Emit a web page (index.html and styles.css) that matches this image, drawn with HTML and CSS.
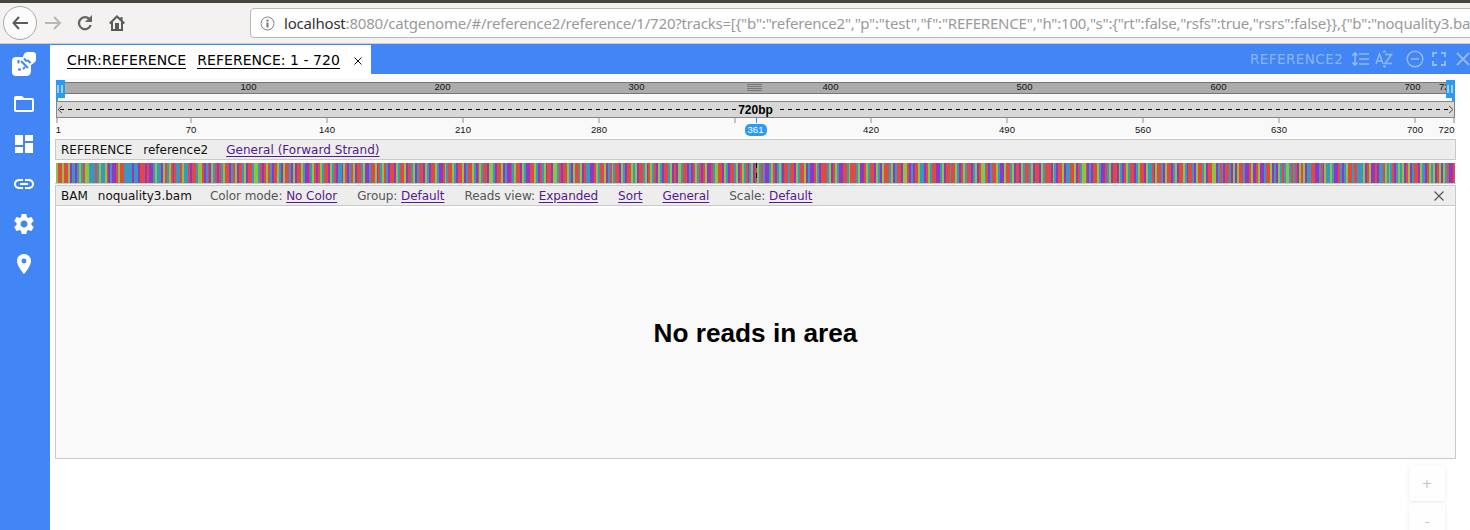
FILE: index.html
```
<!DOCTYPE html>
<html lang="en">
<head>
<meta charset="utf-8">
<title>Genome browser</title>
<link rel="stylesheet" href="styles.css">
</head>
<body>
<header class="browser">
  <div class="back"><svg width="16" height="14" viewBox="0 0 16 14"><path d="M7 1 1.500 7 7 13M2 7h14" fill="none" stroke="#5b5b59" stroke-width="2"/></svg></div>
  <svg class="forward" width="17" height="14" viewBox="0 0 17 14"><path d="m9 1 6 6-6 6M0 7h15" fill="none" stroke="#b8b8b6" stroke-width="2"/></svg>
  <svg class="reload" width="16" height="16" viewBox="0 0 16 16"><path d="M12.500 4.200A6 6 0 1 0 13.700 10" fill="none" stroke="#666664" stroke-width="2.300"/><path d="M15 0v7H8z" fill="#666664"/></svg>
  <svg class="home" width="16" height="16" viewBox="0 0 16 16"><path d="M.7 8.500 8 1.500l7.300 7M12.500 2v4M3 7v8h10V7" fill="none" stroke="#5b5b59" stroke-width="2"/><path d="M6 8h4v7H6z" fill="#5b5b59"/></svg>
  <div class="address">
    <svg width="15" height="15" viewBox="0 0 15 15"><circle cx="7.500" cy="7.500" r="6.500" fill="none" stroke="#858585"/><path d="M7.500 6.500v5M7.500 3.500v2" fill="none" stroke="#777" stroke-width="2"/></svg>
    <span class="url"><b>localhost</b>:8080/catgenome/#/reference2/reference/1/720?tracks=[{"b":"reference2","p":"test","f":"REFERENCE","h":100,"s":{"rt":false,"rsfs":true,"rsrs":false}},{"b":"noquality3.ba</span>
  </div>
</header>
<div class="app">
  <nav class="side">
    <svg width="24" height="24" viewBox="0 0 24 24"><path d="M4 5h7q1-5 5-5h5q3 0 3 3v5q0 2-5 5v6q0 5-5 5H4q-4 0-4-4V9q0-4 4-4z" fill="#fff"/><path d="M6.500 8v3.500M9 9l7 7M12 6.500l3 3M15.500 8l3 3M6 17.500h3M11 17l2-2" stroke="#4285f4" stroke-width="2" fill="none"/></svg>
    <svg width="24" height="24" viewBox="0 0 24 24"><path d="M20 6h-8l-2-2H4c-1.100 0-2 .9-2 2v12c0 1.100.9 2 2 2h16c1.100 0 2-.9 2-2V8c0-1.100-.9-2-2-2zm0 12H4V8h16z" fill="#fff"/></svg>
    <svg width="24" height="24" viewBox="0 0 24 24"><path d="M3 13h8V3H3zm0 8h8v-6H3zm10 0h8V11h-8zm0-18v6h8V3z" fill="#fff"/></svg>
    <svg width="24" height="24" viewBox="0 0 24 24"><path d="M3.900 12c0-1.710 1.390-3.100 3.100-3.100h4V7H7c-2.760 0-5 2.240-5 5s2.240 5 5 5h4v-1.900H7c-1.710 0-3.100-1.390-3.100-3.100zM8 13h8v-2H8zm9-6h-4v1.900h4c1.710 0 3.100 1.390 3.100 3.100s-1.390 3.100-3.100 3.100h-4V17h4c2.760 0 5-2.240 5-5s-2.240-5-5-5z" fill="#fff"/></svg>
    <svg width="24" height="24" viewBox="0 0 24 24"><path d="M19.430 12.980c.04-.32.07-.64.07-.98s-.03-.66-.07-.98l2.110-1.650c.19-.15.24-.42.12-.64l-2-3.460c-.12-.22-.39-.3-.61-.22l-2.490 1c-.52-.4-1.080-.73-1.690-.98l-.38-2.650C14.460 2.180 14.250 2 14 2h-4c-.25 0-.46.18-.49.42l-.38 2.650c-.61.25-1.170.59-1.690.98l-2.490-1c-.23-.09-.49 0-.61.22l-2 3.460c-.13.22-.07.49.12.64l2.110 1.650c-.04.32-.07.65-.07.98s.03.66.07.98l-2.110 1.650c-.19.15-.24.42-.12.64l2 3.460c.12.22.39.3.61.22l2.490-1c.52.4 1.080.73 1.690.98l.38 2.650c.03.24.24.42.49.42h4c.25 0 .46-.18.49-.42l.38-2.650c.61-.25 1.170-.59 1.690-.98l2.490 1c.23.09.49 0 .61-.22l2-3.460c.12-.22.07-.49-.12-.64zM12 15.500c-1.930 0-3.500-1.570-3.500-3.500s1.570-3.500 3.500-3.500 3.500 1.570 3.500 3.500-1.570 3.500-3.500 3.500z" fill="#fff"/></svg>
    <svg width="24" height="24" viewBox="0 0 24 24"><path d="M12 2C8.130 2 5 5.130 5 9c0 5.250 7 13 7 13s7-7.750 7-13c0-3.870-3.130-7-7-7zm0 9.500a2.500 2.500 0 0 1 0-5 2.500 2.500 0 0 1 0 5z" fill="#fff"/></svg>
  </nav>
  <main class="main">
    <div class="tabs">
      <div class="tab"><a>CHR:REFERENCE</a><a class="range">REFERENCE: 1 - 720</a>
        <svg width="8" height="8" viewBox="0 0 8 8"><path d="m.5.5 7 7m0-7-7 7" stroke="#111"/></svg>
      </div>
      <div class="tools">
        <span>REFERENCE2</span>
        <svg class="height-icon" width="17" height="14" viewBox="0 0 17 14"><path d="M3 1v12M.5 3.500 3 1l2.500 2.500M.5 10.500 3 13l2.500-2.500M7 2h10M7 7h10M7 12h10" fill="none" stroke="#92b9f9" stroke-width="1.600"/></svg>
        <svg class="sort-icon" width="18" height="18" viewBox="0 0 18 18"><path d="m1 14 3.500-10L8 14M2 11h5M10 4.500h6.500L10 13.500h7" fill="none" stroke="#92b9f9" stroke-width="1.500"/><path d="M7.500 2.500l2-2.500 2 2.500zM7.500 15.500l2 2.500 2-2.500z" fill="#92b9f9"/></svg>
        <svg class="minus-icon" width="18" height="18" viewBox="0 0 18 18"><circle cx="9" cy="9" r="7.800" fill="none" stroke="#92b9f9" stroke-width="1.500"/><path d="M5 9h8" stroke="#92b9f9" stroke-width="1.700"/></svg>
        <svg class="full-icon" width="14" height="14" viewBox="0 0 14 14"><path d="M1 5V1h4M9 1h4v4M13 9v4H9M5 13H1V9" fill="none" stroke="#92b9f9" stroke-width="2"/></svg>
        <svg class="close-icon" width="14" height="14" viewBox="0 0 14 14"><path d="m1 1 12 12m0-12L1 13" stroke="#92b9f9" stroke-width="1.800"/></svg>
      </div>
    </div>
    <div class="content">
      <svg class="ruler" id="ruler" width="1401" height="65" viewBox="55 74 1401 65">
        <rect x="56" y="78" width="1400" height="59" fill="#f9f9f9"/>
        <rect x="56.500" y="82.500" width="1398" height="11" fill="#ababab" stroke="#777"/>
        <rect x="56.500" y="101.500" width="1398" height="16" fill="#d7d7d7" stroke="#858585"/>
        <path d="M747 84.500h15M747 86.500h15M747 88.500h15M747 90.500h15" stroke="#777"/>
        <path d="M60 109.500h676M780 109.500h669" stroke="#000" stroke-dasharray="4 4"/>
        <path d="m62 106-4 3.500 4 3.500M1449 106l4 3.500-4 3.500" fill="none" stroke="#555"/>
        <text class="span" x="755.500" y="114">720bp</text>
        <g id="marks"></g>
        <path d="M756.500 118v5" stroke="#2c9af5"/>
        <rect x="745" y="124" width="22" height="12" rx="5" fill="#2c9af5"/>
        <text class="label current" x="755.500" y="133">361</text>
        <path d="M56 80h9v18h-7v3h-2zM1446 80h9v21h-3v-3h-6z" fill="#2c9af5"/>
        <path d="M58 85v8M62 85v8M1448 85v8M1452 85v8" stroke="#9bd0fb" stroke-width="2"/>
      </svg>
      <div class="bar reference"><span class="kind">REFERENCE</span><span class="name">reference2</span><a>General (Forward Strand)</a></div>
      <div class="sequence"><svg width="1401" height="20" viewBox="0 0 1401 20"><g id="bases"></g><path d="M701.500 0v5m0 5v5" stroke="#000"/></svg></div>
      <section class="bam">
        <div class="bar"><span class="kind">BAM</span><span class="name">noquality3.bam</span><span class="option mode">Color mode: <a>No Color</a></span><span class="option">Group: <a>Default</a></span><span class="option">Reads view: <a>Expanded</a></span><a class="action">Sort</a><a class="action">General</a><span class="option">Scale: <a>Default</a></span>
          <svg class="close" width="10" height="10" viewBox="0 0 10 10"><path d="m.5.5 9 9m0-9-9 9" stroke="#555" stroke-width="1.200"/></svg>
        </div>
        <div class="empty">No reads in area</div>
      </section>
    </div>
    <div class="zoom"><div>+</div><div>-</div></div>
  </main>
</div>
<script src="tracks.js"></script>
</body>
</html>
```
FILE: styles.css
```
* { box-sizing: border-box; }
body { margin: 0; height: 530px; overflow: hidden; background: #fff; font-family: "DejaVu Sans", sans-serif; }
svg { display: block; flex: none; }
.browser { height: 44px; border-top: 3px solid #45443d; border-bottom: 1px solid #d2cfca; background: #f3f2f0; display: flex; align-items: center; padding-left: 3px; }
.back { width: 34px; height: 34px; flex: none; border: 1px solid #aaa; border-radius: 50%; background: #fbfbfb; display: flex; align-items: center; justify-content: center; }
.forward { margin-left: 8px; }
.reload { margin-left: 15px; }
.home { margin-left: 16px; }
.address { width: 1240px; flex: none; height: 30px; margin-left: 125px; border: 1px solid #bcbab7; border-radius: 4px; background: #fff; display: flex; align-items: center; padding-left: 9px; }
.url { margin-left: 9px; font: 15px/26px "Noto Sans", sans-serif; letter-spacing: -.2px; color: #9a9a9a; white-space: nowrap; }
.url b { font-weight: 400; color: #333; }
.app { display: flex; height: 486px; }
.side { width: 50px; background: #4285f4; padding: 8px 0 0 12px; display: flex; flex-direction: column; gap: 16px; }
.main { flex: 1; min-width: 0; display: flex; flex-direction: column; }
.tabs { height: 30px; flex: none; background: #4285f4; display: flex; justify-content: space-between; padding-top: 1px; }
.tab { width: 321px; background: #fff; padding-left: 17px; display: flex; align-items: center; font-size: 14px; letter-spacing: .14px; white-space: nowrap; }
.tab a { border-bottom: 1px solid #000; line-height: 15px; margin-top: 2px; }
.tab .range { margin-left: 11px; letter-spacing: .04px; }
.tab svg { margin: 3px 0 0 14px; }
.tools { display: flex; align-items: center; color: #8ab3f9; font-size: 13.500px; width: 220px; padding-bottom: 1px; }
.tools span { width: 105px; letter-spacing: .45px; }
.sort-icon { margin-left: 6px; }
.minus-icon { margin-left: 13px; }
.full-icon { margin-left: 8px; }
.close-icon { margin-left: 10px; }
.content { width: 1401px; flex: none; margin-left: 5px; }
.ruler text { text-anchor: middle; font-family: "Liberation Sans", sans-serif; }
.ruler .label { font-size: 9.500px; fill: #111; }
.ruler .current { fill: #fff; }
.ruler .span { font-size: 12px; font-weight: 700; }
.bar { height: 21px; background: #ededed; border: 1px solid #c9c9c9; padding-left: 5px; display: flex; align-items: center; font-size: 12px; white-space: pre; color: #111; }
.bar a { color: #551a8b; text-decoration: underline; text-underline-offset: 2px; }
.name { margin-left: 10px; }
.reference .name { margin-left: 11px; }
.reference a { margin-left: 18px; letter-spacing: .04px; }
.sequence { margin-top: 3px; height: 21px; border-bottom: 1px solid #c9c9c9; }
.bam { height: 274px; margin-top: 1px; border: 1px solid #c9c9c9; background: #f9f9f9; display: flex; flex-direction: column; }
.bam .bar { height: 20px; border-width: 0 0 1px; }
.option { color: #555; margin-left: 20px; letter-spacing: -.065px; }
.option.mode { margin-left: 18px; }
.action { margin-left: 20px; letter-spacing: -.065px; }
.close { margin: 0 11px 0 auto; }
.empty { flex: 1; border-top: 2px solid #fff; display: flex; align-items: center; justify-content: center; font: 700 26.200px "Liberation Sans", sans-serif; color: #000; }
.zoom { width: 36px; margin: 6px 0 0 1359px; display: flex; flex-direction: column; gap: 2px; }
.zoom div { height: 36px; flex: none; display: flex; align-items: center; justify-content: center; background: #fefefe; border-radius: 3px; box-shadow: 0 1px 4px rgba(0,0,0,.08); color: #ccc2b9; font-size: 13px; }
```
FILE: tracks.js
```
const marks = document.getElementById("marks");
const svgNs = "http://www.w3.org/2000/svg";
function add(parent, tag, attrs, text) {
  const node = document.createElementNS(svgNs, tag);
  Object.entries(attrs).forEach(([key, value]) => node.setAttribute(key, value));
  if (text) node.textContent = text;
  parent.prepend(node);
}
[[100, 248.5], [200, 442.5], [300, 636.5], [400, 830.5], [500, 1024.5], [600, 1218.5], [700, 1412.5], [720, 1447]].forEach(([n, x]) =>
  add(marks, "text", { x, y: 90, class: "label" }, n));
[[1, 57, 58.5], [70, 191], [140, 327], [210, 463], [280, 599], ["", 735], [420, 871], [490, 1007], [560, 1143], [630, 1279], [700, 1415], [720, 1454, 1446.5]].forEach(([n, x, tx]) => {
  add(marks, "rect", { x: x - 1, y: 118, width: 2, height: 5, fill: "#c3c3c3" });
  add(marks, "text", { x: tx || x, y: 133, class: "label" }, n);
});
const runs = [
  "GTTGTTGACCACGCTGGCCCTCGCCGTACAATGTTCCCCACCATTTATAACGCCAGTCGTATCCTGCCTATTCGGTACTAGCTATCGTTACTGATTCGATTC",
  "GGCTATGTCATTGCAGTTCAGATTGCAATCGTATGCTTAGCTACCAGTACTGATTCGAACTTGATCGTCATTAGCTTGATTCGACTTAGCATTGCAATGCTT",
  "GCATTGACTTGCATGCTTAGGCATTGACAATCGTTAGCAATTGCATCGATTAGGCTATTGCAGTTCGATCCAATGCTTGACTGCTTAGCATTGCGATTCGAT",
  "GCTAGCATTCGATAGGCTTACATGCTATGAATCGGTTAGCATTCGATGCTACGATGCTCAACGTACGCATTCTTAGCTTGACAATGCATTTCGATGCAATTC",
  "GTTTCGAATGCTTAGCAGTTTCGACTTAGGTACATTGCCATGCTTAACGATTCTTGCATGCTTACGATGGCTACTTGCAAGTTCGATTAGCTTCGATTAGCT",
  "TTAGCATTGACCTTGATCGGTACATTGCAATCGATTAGCATGCTTACGTTAGCCTAGTTCAGTTACGATTGCATTCAGTTCGATTGGACTCATTCAGAGTTC",
  "AATGAATGAACTTGACAGCTCGGCTCTAGTGACCTTAACTAGCCGCAATCACGTTCTTCCCGATGAATACCTGCGCTACGCGATGACTTAGCCATGCGATGA"
];
const colors = { A: "#9335c5", C: "#3b97bf", G: "#8cc63e", T: "#dd4b43" };
const bases = document.getElementById("bases");
[...runs.join("").padEnd(720, "GCTAAT")].slice(0, 720).forEach((base, i) => {
  const left = Math.round(1 + i * 1.9425);
  const right = Math.round(1 + (i + 1) * 1.9425);
  add(bases, "rect", { x: left, y: 0, width: right - left, height: 20, fill: colors[base] });
});
```
